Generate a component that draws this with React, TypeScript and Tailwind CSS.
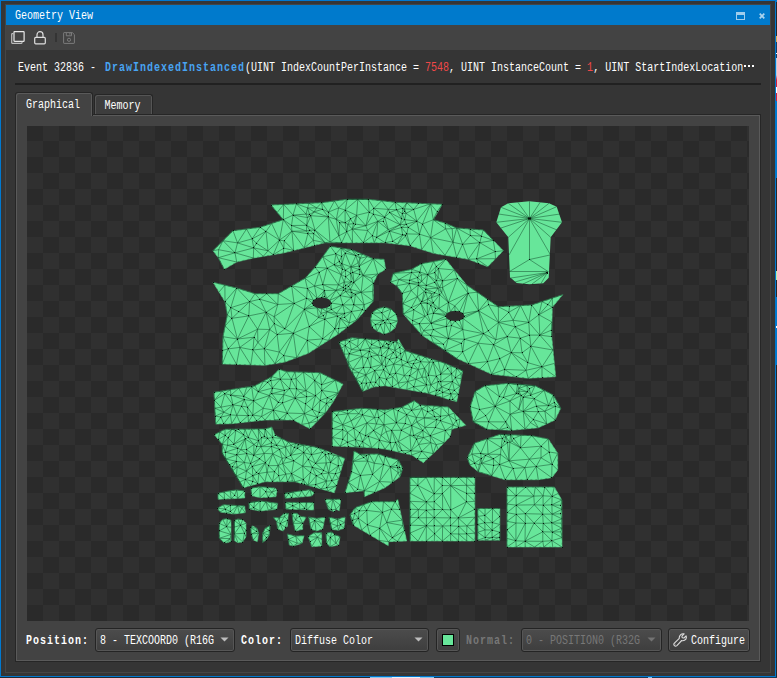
import React from "react";

type Pt = [number, number];
type Focus = { x: number; y: number; r: number; n: number };
type Piece = {
  p: number[];
  gap: number;
  seed: number;
  hole?: [number, number, number, number];
  focus?: Focus[];
  regular?: boolean;
};

const PIECES: Piece[] = [
  {
    seed: 3, gap: 12,
    p: [213, 250.7, 233, 230.7, 260, 227.3, 283.3, 219.7, 271, 205, 321.7, 202.7, 347.3, 199.3, 368.3, 199.3, 395, 202.3, 442.3, 204.3, 433.3, 219.7, 445, 223, 456.7, 228, 483.3, 230, 503.3, 250.7, 487.7, 266.7, 468.3, 259.3, 433.3, 253.3, 410, 245.7, 385, 242.7, 341.7, 242.7, 325, 242.7, 283.3, 253, 253.3, 258, 236.7, 262, 224.3, 269.3, 218.3, 257.7],
    focus: [{ x: 312, y: 213, r: 7, n: 8 }, { x: 310, y: 230, r: 7, n: 7 }, { x: 404, y: 213, r: 7, n: 8 }, { x: 404, y: 230, r: 7, n: 7 }, { x: 340, y: 222, r: 16, n: 10 }, { x: 380, y: 222, r: 16, n: 10 }],
  },
  {
    seed: 7, gap: 13, hole: [321.7, 303, 9.5, 5.4],
    p: [213, 282.3, 236.7, 288, 255, 293.7, 278.3, 293.7, 305, 278.3, 315, 267.3, 330.3, 246.3, 351.7, 249.7, 373.3, 258.7, 384, 259.3, 385.7, 269.3, 377.7, 274, 373.3, 283.3, 373.3, 301, 356.7, 320, 338.3, 334, 308.3, 353.3, 285, 362, 265, 365.3, 222.3, 364, 223, 336.7, 227.3, 315, 225, 301.7],
    focus: [{ x: 350, y: 265, r: 18, n: 26 }, { x: 349, y: 289, r: 9, n: 14 }, { x: 342, y: 306, r: 24, n: 22 }, { x: 321, y: 303, r: 13, n: 8 }],
  },
  {
    seed: 11, gap: 13, hole: [455, 316, 9.2, 5],
    p: [393.3, 273.3, 411.7, 269.3, 421.7, 263.7, 445.7, 259.3, 454.3, 270, 466.7, 285, 498.3, 306.7, 531.7, 305, 562.7, 294.7, 552.3, 307.3, 551.7, 336.7, 555.7, 376.7, 528.3, 378.3, 491.7, 374.3, 456.7, 358.3, 421.7, 335, 403.3, 314, 402.3, 293.3, 396.7, 285.7, 390.7, 282],
    focus: [{ x: 427, y: 280, r: 20, n: 28 }, { x: 427, y: 298, r: 9, n: 14 }, { x: 432, y: 310, r: 24, n: 20 }],
  },
  {
    seed: 5, gap: 20,
    p: [384, 307, 391, 309, 396, 314, 397.5, 321, 395, 328, 390, 332, 384, 334, 377, 331, 372, 327, 370.5, 320, 372, 313, 377, 309],
    focus: [{ x: 384, y: 320.5, r: 1, n: 1 }, { x: 384, y: 320.5, r: 10, n: 6 }],
  },
  {
    seed: 13, gap: 7,
    p: [339, 342.3, 351.7, 337.7, 385, 340.7, 396.7, 342, 398.3, 339, 405, 350.7, 445, 363.3, 462.7, 371, 456.7, 401.7, 428.3, 393.3, 385, 385.7, 373.3, 387, 362.7, 391.3, 349, 366.7, 346.7, 360],
    focus: [{ x: 392, y: 352, r: 12, n: 10 }],
  },
  {
    seed: 17, gap: 8.6,
    p: [214, 392.3, 255, 385.7, 271.7, 376.7, 279, 369.3, 286.7, 371.7, 320, 372.7, 343, 384, 333.3, 401.7, 325, 413.3, 310, 428.7, 293.3, 420, 265, 420, 231.7, 423.7, 215.7, 424],
  },
  {
    seed: 19, gap: 7.8,
    p: [332.3, 411.7, 361.7, 408.3, 385, 410, 401.7, 407.3, 414.3, 400.7, 420, 405, 448.3, 407, 465.7, 425.3, 451.7, 429.3, 450, 436.7, 438, 449, 423.3, 462.7, 411.7, 455, 385, 449, 371.7, 447.7, 332.3, 446],
    focus: [{ x: 425, y: 420, r: 18, n: 10 }],
  },
  {
    seed: 23, gap: 7.2,
    p: [214.3, 434.7, 225, 429.3, 265, 429, 271.7, 427, 275, 435, 288.3, 442, 318.3, 447.7, 344.7, 458.3, 334.3, 492.7, 295, 481.7, 265, 481.7, 243.3, 487.7, 222.3, 453.3, 222.3, 444.3],
  },
  {
    seed: 29, gap: 10.5,
    p: [354, 451, 360, 454.3, 378.3, 454, 385, 456.3, 398.3, 460, 402.7, 468.3, 400, 476.7, 385, 487.7, 364.3, 496.7, 364.3, 490.7, 345, 492.7, 351.7, 471.7],
    focus: [{ x: 399, y: 468, r: 5, n: 12 }, { x: 365, y: 459, r: 5, n: 5 }],
  },
  {
    seed: 31, gap: 10.5,
    p: [395, 501.7, 371.7, 501.7, 355, 507.7, 350, 515, 353.3, 525, 370, 535, 388.3, 545.7, 388.3, 541.7, 406.7, 541, 397.7, 499.3],
    focus: [{ x: 353, y: 516, r: 6, n: 12 }],
  },
  {
    seed: 37, gap: 11.5,
    p: [470.3, 406.7, 475, 391.7, 485, 385.7, 508.3, 383.3, 535, 385.7, 553.3, 395, 560.7, 408.3, 555, 420, 538.3, 427.7, 511.7, 430.3, 486.7, 429, 473.3, 421.7],
    focus: [{ x: 523, y: 390, r: 8, n: 12 }, { x: 545, y: 405, r: 12, n: 6 }],
  },
  {
    seed: 41, gap: 11.5,
    p: [467.3, 457.7, 474.3, 443.3, 500, 434.3, 531.7, 435.7, 548.3, 439, 557.7, 453.3, 557.7, 470, 551.7, 477.7, 538.3, 479.7, 505, 479.7, 478.3, 471.7, 470, 465],
    focus: [{ x: 508, y: 440, r: 7, n: 12 }, { x: 480, y: 455, r: 10, n: 8 }],
  },
  { seed: 43, gap: 8.1, regular: true, p: [410, 477.4, 474.8, 477.4, 474.8, 541, 410, 541] },
  { seed: 47, gap: 7.2, regular: true, p: [477.8, 508.5, 499.8, 508.5, 499.8, 540.2, 477.8, 540.2] },
  { seed: 53, gap: 9, regular: true, p: [507, 487, 554.3, 487, 561.8, 500, 562, 547, 507, 547] },
];

// Small trim pieces, stored at three times their drawn size.
const TRIMS: number[][] = [
  [24, 40, 60, 32, 80, 30, 104, 33, 104, 54, 24, 58],
  [123, 25, 150, 20, 195, 24, 201, 30, 198, 50, 150, 53, 125, 47],
  [224, 40, 250, 36, 300, 29, 313, 38, 305, 48, 226, 55],
  [22, 85, 40, 74, 104, 78, 106, 98, 70, 102, 30, 96],
  [117, 68, 150, 63, 203, 70, 200, 88, 150, 93, 118, 87],
  [226, 67, 311, 68, 311, 90, 228, 87],
  [345, 58, 392, 58, 388, 92, 378, 88, 372, 95, 355, 88],
  [28, 130, 38, 118, 52, 116, 63, 121, 63, 184, 52, 188, 42, 188, 28, 175],
  [73, 121, 84, 117, 98, 119, 108, 130, 108, 170, 98, 186, 84, 188, 73, 182],
  [122, 143, 128, 138, 140, 144, 146, 160, 142, 185, 130, 180, 124, 162],
  [180, 137, 178, 165, 168, 180, 158, 187, 158, 160, 166, 144],
  [190, 112, 208, 114, 222, 100, 235, 100, 232, 140, 226, 142, 220, 153, 203, 147, 200, 125],
  [246, 100, 262, 100, 268, 108, 288, 112, 278, 130, 278, 148, 256, 153, 250, 130],
  [296, 111, 320, 115, 345, 112, 338, 147, 318, 153, 303, 148],
  [357, 112, 382, 117, 405, 111, 402, 145, 385, 151, 365, 148],
  [232, 162, 257, 168, 282, 167, 276, 190, 250, 198, 238, 195],
  [294, 170, 312, 158, 335, 158, 335, 198, 305, 200, 300, 185],
  [348, 160, 365, 156, 374, 164, 390, 170, 386, 195, 360, 200, 350, 190],
];

const ALL: Piece[] = PIECES.concat(
  TRIMS.map((t, i) => ({
    seed: 60 + i,
    gap: 7,
    p: t.map((v, k) => (k % 2 ? 480 : 210) + v / 3),
  }))
);

function random(seed: number) {
  let s = seed * 7919 + 17;
  return () => {
    s = (s * 1103515245 + 12345) & 0x7fffffff;
    return ((s >> 8) & 0xffff) / 0x10000;
  };
}

function inside(x: number, y: number, poly: Pt[]) {
  let hit = false;
  for (let i = 0, j = poly.length - 1; i < poly.length; j = i++) {
    const [xi, yi] = poly[i];
    const [xj, yj] = poly[j];
    if (yi > y !== yj > y && x < ((xj - xi) * (y - yi)) / (yj - yi) + xi) hit = !hit;
  }
  return hit;
}

function delaunay(src: Pt[]) {
  const n = src.length;
  const pts = src.concat([[-4000, -3000], [5000, -3000], [400, 6000]]);
  type Tri = { v: number[]; x: number; y: number; r: number };
  const make = (a: number, b: number, c: number): Tri => {
    const [ax, ay] = pts[a], [bx, by] = pts[b], [cx, cy] = pts[c];
    const d = 2 * (ax * (by - cy) + bx * (cy - ay) + cx * (ay - by)) || 1e-9;
    const A = ax * ax + ay * ay, B = bx * bx + by * by, C = cx * cx + cy * cy;
    const x = (A * (by - cy) + B * (cy - ay) + C * (ay - by)) / d;
    const y = (A * (cx - bx) + B * (ax - cx) + C * (bx - ax)) / d;
    return { v: [a, b, c], x, y, r: (ax - x) ** 2 + (ay - y) ** 2 };
  };
  let tris = [make(n, n + 1, n + 2)];
  for (let i = 0; i < n; i++) {
    const [x, y] = pts[i];
    const edges = new Map<string, [number, number]>();
    const keep: Tri[] = [];
    for (const t of tris) {
      if ((x - t.x) ** 2 + (y - t.y) ** 2 < t.r) {
        for (let k = 0; k < 3; k++) {
          const a = t.v[k], b = t.v[(k + 1) % 3];
          const key = Math.min(a, b) + "_" + Math.max(a, b);
          if (edges.has(key)) edges.delete(key);
          else edges.set(key, [a, b]);
        }
      } else keep.push(t);
    }
    edges.forEach(([a, b]) => keep.push(make(a, b, i)));
    tris = keep;
  }
  const out = new Map<string, [number, number]>();
  for (const t of tris) {
    for (let k = 0; k < 3; k++) {
      const a = t.v[k], b = t.v[(k + 1) % 3];
      if (a < n && b < n) out.set(Math.min(a, b) + "_" + Math.max(a, b), [a, b]);
    }
  }
  return [...out.values()];
}

function buildMesh(piece: Piece) {
  const rnd = random(piece.seed);
  const poly: Pt[] = [];
  for (let i = 0; i < piece.p.length; i += 2) poly.push([piece.p[i], piece.p[i + 1]]);
  const g = piece.gap;
  const pts: Pt[] = [];
  poly.forEach((a, i) => {
    const b = poly[(i + 1) % poly.length];
    const len = Math.hypot(b[0] - a[0], b[1] - a[1]);
    const steps = Math.max(1, Math.round(len / g));
    for (let k = 0; k < steps; k++) {
      pts.push([
        a[0] + ((b[0] - a[0]) * k) / steps + rnd() * 0.02,
        a[1] + ((b[1] - a[1]) * k) / steps + rnd() * 0.02,
      ]);
    }
  });
  const edge = pts.length;
  const add = (x: number, y: number, min: number) => {
    if (!inside(x, y, poly)) return;
    if (piece.hole) {
      const [hx, hy, rx, ry] = piece.hole;
      if (((x - hx) / rx) ** 2 + ((y - hy) / ry) ** 2 < 1.1) return;
    }
    if (pts.some((q) => Math.hypot(q[0] - x, q[1] - y) < min)) return;
    pts.push([x, y]);
  };
  if (piece.hole) {
    const [hx, hy, rx, ry] = piece.hole;
    for (let k = 0; k < 12; k++) {
      const t = (k / 12) * Math.PI * 2;
      pts.push([hx + Math.cos(t) * rx + rnd() * 0.02, hy + Math.sin(t) * ry]);
    }
  }
  (piece.focus || []).forEach((f) => {
    for (let k = 0; k < f.n; k++) {
      const t = rnd() * 6.28, r = Math.sqrt(rnd()) * f.r;
      add(f.x + Math.cos(t) * r, f.y + Math.sin(t) * r, 1.8);
    }
  });
  const xs = poly.map((q) => q[0]), ys = poly.map((q) => q[1]);
  const x0 = Math.min(...xs), x1 = Math.max(...xs), y0 = Math.min(...ys), y1 = Math.max(...ys);
  const jitter = piece.regular ? 0.08 : 1.1;
  for (let y = y0 + g; y < y1; y += g) {
    for (let x = x0 + g; x < x1; x += g) {
      if (piece.regular && rnd() < 0.28) continue;
      add(x + (rnd() - 0.5) * g * jitter, y + (rnd() - 0.5) * g * jitter, g * 0.36);
    }
  }
  const lines = delaunay(pts)
    .filter(([a, b]) => {
      const mx = (pts[a][0] + pts[b][0]) / 2, my = (pts[a][1] + pts[b][1]) / 2;
      if (!piece.hole) return inside(mx, my, poly);
      const [hx, hy, rx, ry] = piece.hole;
      return inside(mx, my, poly) && ((mx - hx) / rx) ** 2 + ((my - hy) / ry) ** 2 > 0.9;
    })
    .map(([a, b]) => `M${pts[a][0].toFixed(1)} ${pts[a][1].toFixed(1)}L${pts[b][0].toFixed(1)} ${pts[b][1].toFixed(1)}`)
    .join("");
  const dots = pts
    .filter((_, i) => i >= edge || i % 2 === 0)
    .filter(() => rnd() < 0.7)
    .map(([x, y]) => `M${Math.floor(x)} ${Math.floor(y)}h1v1h-1z`)
    .join("");
  return { outline: "M" + poly.map((q) => q.join(" ")).join("L") + "Z", lines, dots };
}

const MESHES = ALL.map((piece) => ({ ...buildMesh(piece), hole: piece.hole }));

function UvMesh() {
  return (
    <svg className="block h-[495px] w-[722px]" viewBox="27 126 722 495">
      {MESHES.map((m, i) => (
        <g key={i}>
          <path d={m.outline} fill="#67e69a" stroke="#67e69a" strokeWidth=".5" />
          <path d={m.lines} fill="none" stroke="#08381f" strokeOpacity=".6" strokeWidth=".75" />
          <path d={m.outline} fill="none" stroke="#123d26" strokeOpacity=".55" strokeWidth=".6" strokeDasharray="2 3" />
          {m.hole && <ellipse cx={m.hole[0]} cy={m.hole[1]} rx={m.hole[2]} ry={m.hole[3]} fill="#2b2b2b" />}
          <path d={m.dots} fill="#04150b" shapeRendering="crispEdges" />
        </g>
      ))}
      <path
        d="M529.3 201.3L508.3 203.3L501 207.3L496.3 222.3L508.3 237.3L510 277.3L516.7 283L529.3 284.3L543.3 283.3L548.7 277.7L550.7 237.3L562 222.3L556.7 206.7L549 203.3Z"
        fill="#67e69a"
      />
      <path
        d="M529.5 218.5V201.3M529.5 218.5L518 202.5M529.5 218.5L508.3 203.3M529.5 218.5L501 207.3M529.5 218.5L498.5 214M529.5 218.5L496.3 222.3M529.5 218.5L501 228M529.5 218.5L508.3 237.3M529.5 218.5L540 202.5M529.5 218.5L549 203.3M529.5 218.5L556.7 206.7M529.5 218.5L560 214M529.5 218.5L562 222.3M529.5 218.5L557 230M529.5 218.5L550.7 237.3M529.5 218.5L509 255M529.5 218.5V259.5M529.5 218.5L550 254M529.5 259.5L509.5 271.5M529.5 259.5L550 255M529.5 259.5L548 271.5M509.5 271.5H548.5M547.5 272.5L511 278M547.5 272.5L515 282M547.5 272.5L523 284M547.5 272.5L532 284M547.5 272.5L541 283.5"
        fill="none" stroke="#08381f" strokeOpacity=".6" strokeWidth=".75"
      />
      <path d="M528 217.5h3v2h-3zM529 259h1v1h-1zM546 272h2v1h-2zM547 273h1v1h-1z" fill="#04150b" />
    </svg>
  );
}

function T({ children, bold, className = "" }: { children: React.ReactNode; bold?: boolean; className?: string }) {
  return (
    <span
      className={`inline-block origin-center translate-y-[2px] scale-y-[1.2] whitespace-pre font-['Liberation_Mono',monospace] text-[10px] leading-[12px] ${bold ? "font-bold tracking-[1px]" : ""} ${className}`}
    >
      {children}
    </span>
  );
}

function Arrow({ className }: { className: string }) {
  return (
    <svg className={`mb-px h-[5px] w-[9px] ${className}`} viewBox="0 0 9 5">
      <path d="M0.5 0.5h8L4.5 4.5z" fill="currentColor" />
    </svg>
  );
}

const control =
  "flex h-[24px] shrink-0 items-center rounded-[3px] border border-[#242424] bg-linear-to-b from-[#4c4c4c] to-[#3e3e3e] shadow-[inset_0_0_0_1px_#565656]";

export default function App() {
  return (
    <div className="flex h-[678px] w-[777px] flex-col overflow-hidden bg-[#25282d] text-white">
      <div className="flex h-[677px]">
        <div className="flex w-[776px] flex-col border border-[#0078d0] bg-[#353535] px-[4px] py-[3px]">
          <div className="flex flex-1 flex-col border border-[#454545]">
            <header className="flex h-[20px] items-center bg-[#007acc] pr-[5px] pl-[9px]">
              <T className="flex-1">Geometry View</T>
              <svg className="mt-px mr-[14px] h-[8px] w-[9px]" viewBox="0 0 9 8" shapeRendering="crispEdges">
                <path d="M0 0h9v8H0zM1 3v4h7V3z" fill="#9fcdec" fillRule="evenodd" />
              </svg>
              <svg className="mt-px h-[6px] w-[6px]" viewBox="0 0 6 6">
                <path d="M.7.7l4.6 4.6M5.3.7L.7 5.3" stroke="#a9d3ee" strokeWidth="1.7" />
              </svg>
            </header>

            <div className="flex h-[25px] items-center bg-[#434343] pl-[5px]">
              <svg className="h-[13px] w-[14px]" viewBox="0 0 14 13" fill="none">
                <path d="M3.5.7h9a.6.6 0 0 1 .6.6v8.400a.6.6 0 0 1-.6.6h-9a.5.5 0 0 1-.5-.5V1.200a.5.5 0 0 1 .5-.5z" stroke="#e8e8e8" strokeWidth="1.2" />
                <path d="M2.500 2.700H1.200a.5.5 0 0 0-.5.5v8.600a.5.5 0 0 0 .5.5h9.300a.5.5 0 0 0 .5-.5v-1" stroke="#bcbcbc" strokeWidth="1.2" />
              </svg>
              <svg className="ml-[9px] h-[14px] w-[12px]" viewBox="0 0 12 14" fill="none" stroke="#dedede" strokeWidth="1.2">
                <path d="M3 6.3V3.700a3 3 0 0 1 6 0v2.600" />
                <rect x=".7" y="6.4" width="10.6" height="6.4" rx="1" />
              </svg>
              <i className="ml-[9px] block h-[9px] w-[2px] bg-[#343434]" />
              <svg className="ml-[6px] h-[12px] w-[12px]" viewBox="0 0 12 12" fill="none" stroke="#7b7b7b" strokeWidth="1">
                <path d="M.6 1.100a.5.5 0 0 1 .5-.5h8.200l2.100 2v8.300a.5.5 0 0 1-.5.5H1.100a.5.5 0 0 1-.5-.5z" />
                <path d="M3.300.8v3h5.200v-3M6.900 1v1.700" />
                <circle cx="6" cy="7.8" r="1.6" />
              </svg>
            </div>

            <main className="flex flex-1 flex-col px-[9px] pb-[10px]">
              <div className="flex h-[35px] items-center border-b-2 border-[#212121] pl-[3px]">
                <T className="w-[87px] shrink-0">Event 32836 - </T>
                <T bold className="text-[#48a4f2]">DrawIndexedInstanced</T>
                <T>(UINT IndexCountPerInstance = </T>
                <T className="text-[#f04848]">7548</T>
                <T>, UINT InstanceCount = </T>
                <T className="text-[#f04848]">1</T>
                <T>, UINT StartIndexLocation</T>
                <span className="flex gap-[2px] pb-px pl-px">
                  <i className="h-[2px] w-[2px] bg-white" />
                  <i className="h-[2px] w-[2px] bg-white" />
                  <i className="h-[2px] w-[2px] bg-white" />
                </span>
              </div>

              <div className="z-10 mt-[7px] flex h-[24px] items-end">
                <div className="flex h-[24px] w-[78px] justify-center rounded-t-[3px] border border-b-0 border-[#262626] bg-[#434343] pt-[5px] pr-[2px] shadow-[inset_1px_1px_0_#5a5a5a,inset_-1px_0_0_#5a5a5a]">
                  <T>Graphical</T>
                </div>
                <div className="mb-[2px] ml-px flex h-[20px] w-[59px] items-center justify-center rounded-t-[3px] border border-b-0 border-[#262626] bg-[#3d3d3d] pr-[2px] shadow-[inset_1px_1px_0_#555,inset_-1px_0_0_#555]">
                  <T>Memory</T>
                </div>
              </div>

              <section className="-mt-[2px] flex flex-1 flex-col border border-[#262626] bg-[#434343] shadow-[inset_0_0_0_1px_#5a5a5a]">
                <div className="mt-[11px] ml-[11px] h-[495px] w-[722px] bg-[conic-gradient(#303030_0_25%,#2a2a2a_0_50%,#303030_0_75%,#2a2a2a_0)] bg-size-[32px_32px] [background-position:0_-1px]">
                  <UvMesh />
                </div>
                <div className="mt-[7px] flex items-center pl-[10px]">
                  <T bold className="w-[69px]">Position:</T>
                  <div className={`${control} w-[140px] pr-[5px] pl-[4px]`}>
                    <T className="w-[120px]">8 - TEXCOORD0 (R16G</T>
                    <Arrow className="text-[#bdbdbd]" />
                  </div>
                  <T bold className="ml-[6px] w-[49px]">Color:</T>
                  <div className={`${control} w-[139px] justify-between pr-[5px] pl-[4px]`}>
                    <T>Diffuse Color</T>
                    <Arrow className="text-[#bdbdbd]" />
                  </div>
                  <div className={`${control} ml-[7px] w-[24px] justify-center`}>
                    <i className="mb-px h-[12px] w-[12px] border border-black bg-[#67e69a]" />
                  </div>
                  <T bold className="ml-[6px] w-[55px] text-[#777]">Normal:</T>
                  <div className={`${control} w-[141px] pr-[5px] pl-[4px]`}>
                    <T className="w-[121px] text-[#777]">0 - POSITION0 (R32G</T>
                    <Arrow className="text-[#737373]" />
                  </div>
                  <div className={`${control} ml-[6px] w-[82px] pl-[4px]`}>
                    <svg className="mr-[4px] h-[14px] w-[14px]" viewBox="0 0 14 14" fill="none" stroke="#dcdcdc" strokeWidth="1.1" strokeLinejoin="round">
                      <path d="M11.1.9L8.9 3.1l.3 1.6 1.7.3 2.2-2.2c.6 1.8-.1 3.7-1.6 4.5-.9.5-2 .5-2.8.2L3.9 12.6c-1.8 1.6-4-.5-2.5-2.4L6.300 5.3C5.900 2.700 8.300.1 11.100.900z" />
                      <path d="M2.600 11.200h.300" />
                    </svg>
                    <T>Configure</T>
                  </div>
                </div>
              </section>
            </main>
          </div>
        </div>
        <div className="h-[677px] w-px bg-[linear-gradient(#007acc_0_2px,#25282d_2px_36px,#d8a850_36px_42px,#173d63_42px_53px,#fff_53px_54px,#173d63_54px_58px,#b5cfe2_58px_75px,#d21f3c_80px_87px,#fff_87px_93px,#d21f3c_93px_101px,#007acc_101px_178px,#25282d_178px_271px,#b0f0b0_271px_280px,#25282d_280px_297px,#007acc_297px_326px,#fff_326px_328px,#007acc_328px_365px,#25282d_365px)]" />
      </div>
      <div className="h-px bg-[linear-gradient(90deg,#25282d_0_370px,#8cc8ea_370px_392px,#e8f2f8_392px_420px,#8cc8ea_420px_434px,#1d3852_434px_648px,#7cc4ee_648px_652px,#1d3852_652px)]" />
    </div>
  );
}
